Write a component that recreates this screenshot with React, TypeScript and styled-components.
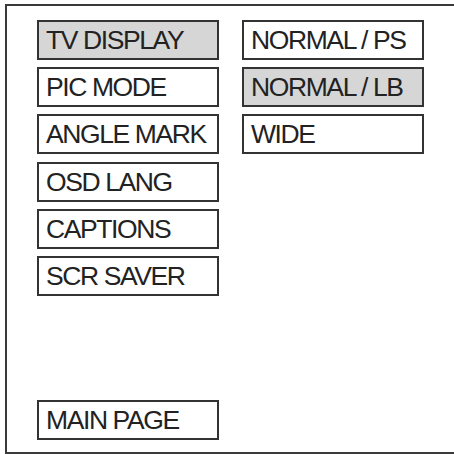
import React from "react";
import styled, { createGlobalStyle } from "styled-components";

const Global = createGlobalStyle`
  html, body { margin: 0; padding: 0; background: #fff; overflow: hidden; }
  body { font-family: "Liberation Sans", Arial, Helvetica, sans-serif; }
`;

const Frame = styled.div`
  box-sizing: border-box;
  margin: 4px 0 0 5px;
  width: 449px;
  height: 450px;
  border: 2px solid #3a3a3a;
  border-right: none;
  padding: 14px 0 12px 30px;
  display: grid;
  grid-template-columns: 182px 182px;
  column-gap: 23px;
  align-items: stretch;
`;

const Column = styled.div`
  display: flex;
  flex-direction: column;
  gap: 7.2px;
`;

const Item = styled.div<{ $active?: boolean }>`
  box-sizing: border-box;
  height: 40px;
  border: 2px solid #333;
  background: ${(p) => (p.$active ? "#d6d6d6" : "#fff")};
  color: #222;
  font-size: 26.5px;
  letter-spacing: -1.4px;
  line-height: 36px;
  padding-left: 7px;
  white-space: nowrap;
  overflow: hidden;
`;

const Spacer = styled.div`
  flex: 1;
`;

export default function App() {
  const left = ["TV DISPLAY", "PIC MODE", "ANGLE MARK", "OSD LANG", "CAPTIONS", "SCR SAVER"];
  const right = ["NORMAL / PS", "NORMAL / LB", "WIDE"];
  return (
    <>
      <Global />
      <Frame>
        <Column>
          {left.map((t, i) => (
            <Item key={t} $active={i === 0}>{t}</Item>
          ))}
          <Spacer />
          <Item>MAIN PAGE</Item>
        </Column>
        <Column>
          {right.map((t, i) => (
            <Item key={t} $active={i === 1}>{t}</Item>
          ))}
        </Column>
      </Frame>
    </>
  );
}
